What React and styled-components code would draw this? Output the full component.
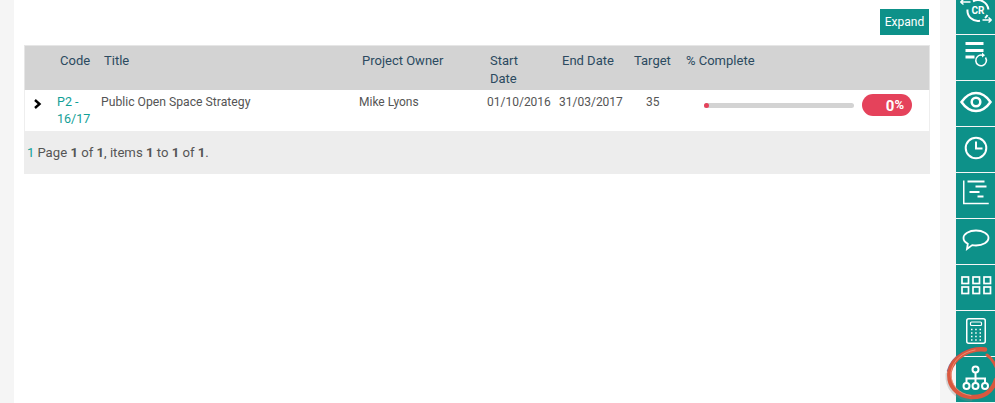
import React from 'react';
import styled, { createGlobalStyle } from 'styled-components';

const GlobalStyle = createGlobalStyle`
  html, body {
    margin: 0;
    height: 100%;
    overflow: hidden;
    background: #f5f5f5;
    font-family: Roboto, "Liberation Sans", sans-serif;
  }
`;

const teal = '#0d9189';
const linkTeal = '#12a097';
const columns = '32px 44px 258px 128px 72px 72px 52px 1fr';

const Page = styled.div`
  display: flex;
  height: 403px;
  padding-left: 14px;
  overflow: hidden;
`;

const Main = styled.main`
  width: 926px;
  background: #fff;
  padding: 9px 10px 0;
  box-sizing: border-box;
`;

const Toolbar = styled.div`
  display: flex;
  justify-content: flex-end;
  height: 36px;
  padding-right: 1px;
  box-sizing: border-box;
`;

const ExpandButton = styled.button`
  width: 49px;
  height: 26px;
  padding: 0;
  border: 0;
  background: ${teal};
  color: #fff;
  font: 400 12px Roboto, sans-serif;
`;

const HeaderRow = styled.div`
  display: grid;
  grid-template-columns: ${columns};
  height: 45px;
  background: #d3d3d3;
  border: 1px solid #e6e6e6;
  border-bottom: 0;
  box-sizing: border-box;
`;

const HeaderCell = styled.div`
  padding: 6px 0 0 3px;
  color: #2b4a60;
  font-size: 13px;
  line-height: 18px;
  white-space: nowrap;
`;

const DataRow = styled.div`
  display: grid;
  grid-template-columns: ${columns};
  height: 41px;
  background: #fff;
  border: 1px solid #eee;
  border-width: 0 1px;
  box-sizing: border-box;
`;

const Cell = styled.div`
  padding: 4px 0 0 ${(p) => p.$indent || 0}px;
  color: #555;
  font-size: ${(p) => p.$size || 12}px;
  line-height: 16px;
  white-space: nowrap;
`;

const Arrow = styled.div`
  padding: 9px 0 0 8px;
  line-height: 0;
`;

const CodeLink = styled.a`
  display: block;
  color: ${linkTeal};
  font-size: 12.5px;
  line-height: 17px;
  padding-top: 3px;
  white-space: pre-line;
`;

const ProgressCell = styled.div`
  display: flex;
  align-items: flex-start;
  padding: 4px 0 0 21px;
`;

const Track = styled.div`
  width: 150px;
  height: 5px;
  margin-top: 9px;
  background: #d3d3d3;
  border-radius: 3px;
`;

const Fill = styled.div`
  height: 5px;
  background: #e5425b;
  border-radius: 3px;
`;

const Pill = styled.div`
  width: 50px;
  height: 22px;
  margin-left: 8px;
  padding-right: 8px;
  box-sizing: border-box;
  background: #e5425b;
  border-radius: 11px;
  color: #fff;
  font-weight: 700;
  font-size: 15px;
  line-height: 22px;
  text-align: right;
`;

const PercentSign = styled.span`
  font-size: 13px;
  vertical-align: 1.5px;
`;

const Footer = styled.div`
  display: flex;
  align-items: center;
  gap: 3px;
  height: 43px;
  padding-left: 3px;
  background: #ededed;
  color: #555;
  font-size: 13.15px;
`;

const PageLink = styled.a`
  color: ${linkTeal};
`;

const Gutter = styled.div`
  width: 16px;
`;

const Sidebar = styled.nav`
  position: relative;
  display: flex;
  flex-direction: column;
  gap: 1px;
  width: 39px;
  margin-top: -11px;
`;

const SideButton = styled.div`
  display: flex;
  flex: none;
  align-items: center;
  justify-content: center;
  height: 45px;
  padding-bottom: 3px;
  box-sizing: border-box;
  background: ${teal};
`;

const Ring = styled.svg`
  position: absolute;
  left: -11px;
  top: 351px;
  overflow: visible;
  pointer-events: none;
`;

const Icon = ({ children }) => (
  <svg width="32" height="32" viewBox="0 0 32 32" fill="none" stroke="#fff" strokeWidth="2">
    {children}
  </svg>
);

const icons = [
  <Icon key="cr">
    <path d="M13 7.300A10.500 10.500 0 0 1 28.400 15.500M27.500 21A10.500 10.500 0 0 1 25 24M20 26.800A10.500 10.500 0 0 1 7.500 15.500" strokeWidth="2" />
    <path d="M10.500 8H.5M.5 8l3-2.500M.5 8l3 2.500M22.500 26h9M31.500 26l-3-2.500M31.500 26l-3 2.500" strokeWidth="1.500" />
    <text x="18" y="20" fill="#fff" stroke="none" fontFamily="Roboto" fontWeight="700" fontSize="10" textAnchor="middle">CR</text>
  </Icon>,
  <Icon key="list">
    <path d="M5.500 3.500h18M5.500 10.500h18M5.500 17h9" strokeWidth="3" />
    <path d="M25.500 17.500a5.300 5.300 0 1 1-3.500-2.300" strokeWidth="1.500" />
    <path d="M22 12.500l3 2.700-3 2.300z" fill="#fff" stroke="none" />
  </Icon>,
  <Icon key="eye">
    <path d="M1.500 16C6 9.500 11 7 16 7s10 2.500 14.500 9C26 22.500 21 25 16 25S6 22.500 1.500 16z" strokeWidth="2.500" />
    <circle cx="16" cy="16" r="4.300" strokeWidth="2.500" />
  </Icon>,
  <Icon key="clock">
    <circle cx="16" cy="16" r="10.300" strokeWidth="2" />
    <path d="M16 9.500v7h6.500" strokeWidth="2" />
  </Icon>,
  <Icon key="gantt">
    <path d="M3.750 2.500v23h25" strokeWidth="1.500" />
    <path d="M7.500 3.500h17M15.500 8.500h11M9.500 14h10M17.500 18.500h6" strokeWidth="2" />
  </Icon>,
  <Icon key="chat">
    <path d="M16 6.500c7 0 12.500 3.300 12.500 7.500S23 21.500 16 21.500c-1.300 0-2.500-.1-3.800-.4L7 25l.8-5.300C5.100 18.300 3.500 16.300 3.500 14 3.500 9.800 9 6.500 16 6.500z" strokeWidth="1.800" />
  </Icon>,
  <Icon key="grid">
    <g strokeWidth="1.700">
      <rect x="2" y="7" width="6.500" height="6.500" />
      <rect x="13" y="7" width="6.500" height="6.500" />
      <rect x="24" y="7" width="6.500" height="6.500" />
      <rect x="2" y="17" width="6.500" height="6.500" />
      <rect x="13" y="17" width="6.500" height="6.500" />
      <rect x="24" y="17" width="6.500" height="6.500" />
    </g>
  </Icon>,
  <Icon key="calc">
    <rect x="6.750" y="2.750" width="18.500" height="24.500" rx="2" strokeWidth="1.500" />
    <rect x="10.500" y="6" width="11" height="3.500" rx="1" strokeWidth="1.200" />
    <path
      d="M11 13.500h1.500M15.200 13.500h1.500M19.500 13.500h1.500M11 17h1.500M15.200 17h1.500M19.500 17h1.500M11 20.500h1.500M15.200 20.500h1.500M19.500 20.500h1.500M11 24h1.500M15.200 24h1.500M19.500 24h1.500"
      strokeWidth="1.600"
    />
  </Icon>,
  <Icon key="tree">
    <g strokeWidth="2">
      <circle cx="15.500" cy="7.500" r="3" />
      <circle cx="6.500" cy="24" r="3" />
      <circle cx="15.500" cy="24" r="3" />
      <circle cx="25" cy="24" r="3" />
      <path d="M15.500 10.500v10.500M6.500 21v-4.500h18.500V21" />
    </g>
  </Icon>,
];

export default function App() {
  return (
    <>
      <GlobalStyle />
      <Page>
        <Main>
          <Toolbar>
            <ExpandButton>Expand</ExpandButton>
          </Toolbar>
          <HeaderRow>
            <div />
            <HeaderCell>Code</HeaderCell>
            <HeaderCell>Title</HeaderCell>
            <HeaderCell>Project Owner</HeaderCell>
            <HeaderCell>Start<br />Date</HeaderCell>
            <HeaderCell>End Date</HeaderCell>
            <HeaderCell>Target</HeaderCell>
            <HeaderCell>% Complete</HeaderCell>
          </HeaderRow>
          <DataRow>
            <Arrow>
              <svg width="9" height="10" viewBox="0 0 9 10" fill="none" stroke="#000" strokeWidth="2.400">
                <path d="M2 1l4.500 4L2 9" />
              </svg>
            </Arrow>
            <CodeLink>{'P2 -\n16/17'}</CodeLink>
            <Cell $size={12.2}>Public Open Space Strategy</Cell>
            <Cell>Mike Lyons</Cell>
            <Cell>01/10/2016</Cell>
            <Cell>31/03/2017</Cell>
            <Cell $indent={15}>35</Cell>
            <ProgressCell>
              <Track>
                <Fill style={{ width: Math.max(0 * 150, 5) }} />
              </Track>
              <Pill>0<PercentSign>%</PercentSign></Pill>
            </ProgressCell>
          </DataRow>
          <Footer>
            <PageLink>1</PageLink>
            <span>
              Page <b>1</b> of <b>1</b>, items <b>1</b> to <b>1</b> of <b>1</b>.
            </span>
          </Footer>
        </Main>
        <Gutter />
        <Sidebar>
          {icons.map((icon, i) => (
            <SideButton key={i}>{icon}</SideButton>
          ))}
          <Ring width="50" height="63" viewBox="0 0 50 63" fill="none" strokeLinecap="round">
            <path d="M2 34C1 48 11 59 26 60" stroke="#888" strokeWidth="3" opacity=".3" />
            <path d="M39 8C25 6 7 15 2.500 31" stroke="#5f4f86" strokeWidth="1.500" opacity=".8" />
            <path d="M40 9.500C26 8 8 16 4.500 32C3 46 12 56 26 57C38 58 47 52 51 40" stroke="#d9583f" strokeWidth="4.500" />
            <path d="M30 10C18 12 8 20 6 32C5 45 14 54 26 55.500" stroke="#ef9a80" strokeWidth="1" opacity=".8" />
            <path d="M42 15C46 18 49 22 51 27" stroke="#d9583f" strokeWidth="3" />
          </Ring>
        </Sidebar>
      </Page>
    </>
  );
}
